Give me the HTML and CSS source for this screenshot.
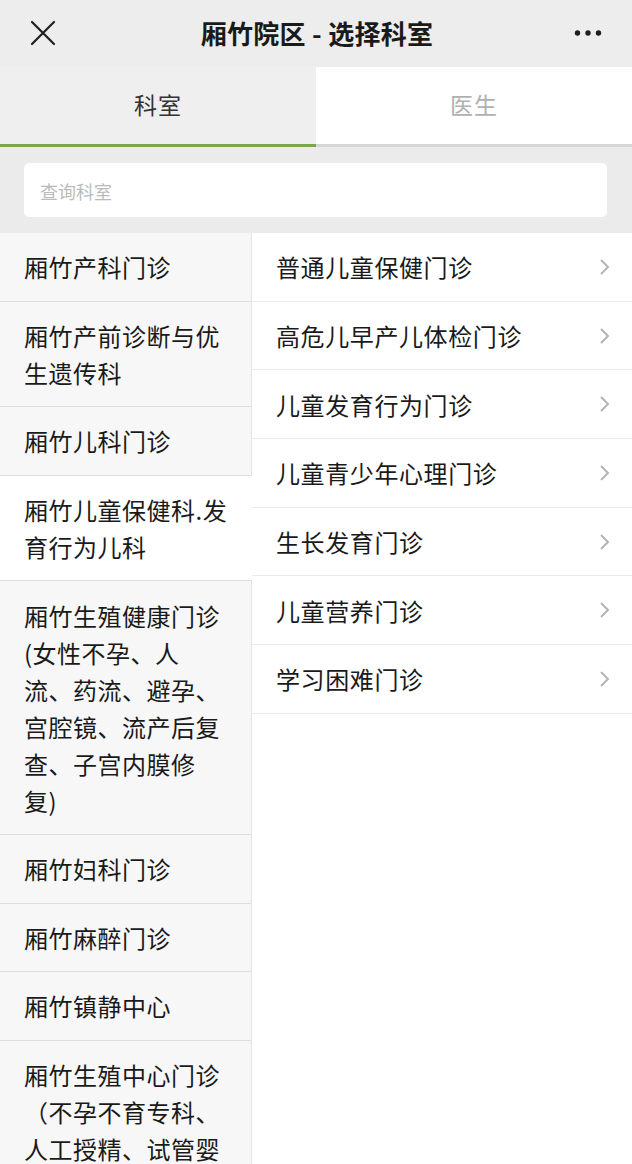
FILE: index.html
```html
<!DOCTYPE html>
<html lang="zh-CN">
<head>
<meta charset="utf-8">
<title>厢竹院区 - 选择科室</title>
<link rel="stylesheet" href="styles.css">
</head>
<body>
<div class="page">
  <header class="nav">
    <svg class="nav-close" width="26" height="26" viewBox="0 0 26 26"><path d="M2 2 L24 24 M24 2 L2 24" stroke="#1f1f1f" stroke-width="2.2" fill="none" stroke-linecap="round"/></svg>
    <h1 class="nav-title">厢竹院区 - 选择科室</h1>
    <svg class="nav-more" width="28" height="8" viewBox="0 0 28 8"><circle cx="3.5" cy="4" r="2.7" fill="#1f1f1f"/><circle cx="14" cy="4" r="2.7" fill="#1f1f1f"/><circle cx="24.5" cy="4" r="2.7" fill="#1f1f1f"/></svg>
  </header>

  <div class="tabs">
    <div class="tab tab-active">科室</div>
    <div class="tab">医生</div>
  </div>

  <div class="search-wrap">
    <div class="search">查询科室</div>
  </div>

  <div class="lists">
    <ul class="dept-list">
      <li class="dept">厢竹产科门诊</li>
      <li class="dept">厢竹产前诊断与优生遗传科</li>
      <li class="dept">厢竹儿科门诊</li>
      <li class="dept dept-active">厢竹儿童保健科.发育行为儿科</li>
      <li class="dept">厢竹生殖健康门诊(女性不孕、人流、药流、避孕、宫腔镜、流产后复查、子宫内膜修复)</li>
      <li class="dept">厢竹妇科门诊</li>
      <li class="dept">厢竹麻醉门诊</li>
      <li class="dept">厢竹镇静中心</li>
      <li class="dept">厢竹生殖中心门诊（不孕不育专科、人工授精、试管婴儿）</li>
    </ul>
    <ul class="clinic-list">
      <li class="clinic"><span>普通儿童保健门诊</span><svg class="chev" width="11" height="18" viewBox="0 0 11 18"><path d="M2 2 L9 9 L2 16" stroke="#b4b4b4" stroke-width="2" fill="none"/></svg></li>
      <li class="clinic"><span>高危儿早产儿体检门诊</span><svg class="chev" width="11" height="18" viewBox="0 0 11 18"><path d="M2 2 L9 9 L2 16" stroke="#b4b4b4" stroke-width="2" fill="none"/></svg></li>
      <li class="clinic"><span>儿童发育行为门诊</span><svg class="chev" width="11" height="18" viewBox="0 0 11 18"><path d="M2 2 L9 9 L2 16" stroke="#b4b4b4" stroke-width="2" fill="none"/></svg></li>
      <li class="clinic"><span>儿童青少年心理门诊</span><svg class="chev" width="11" height="18" viewBox="0 0 11 18"><path d="M2 2 L9 9 L2 16" stroke="#b4b4b4" stroke-width="2" fill="none"/></svg></li>
      <li class="clinic"><span>生长发育门诊</span><svg class="chev" width="11" height="18" viewBox="0 0 11 18"><path d="M2 2 L9 9 L2 16" stroke="#b4b4b4" stroke-width="2" fill="none"/></svg></li>
      <li class="clinic"><span>儿童营养门诊</span><svg class="chev" width="11" height="18" viewBox="0 0 11 18"><path d="M2 2 L9 9 L2 16" stroke="#b4b4b4" stroke-width="2" fill="none"/></svg></li>
      <li class="clinic"><span>学习困难门诊</span><svg class="chev" width="11" height="18" viewBox="0 0 11 18"><path d="M2 2 L9 9 L2 16" stroke="#b4b4b4" stroke-width="2" fill="none"/></svg></li>
    </ul>
  </div>
</div>
</body>
</html>
```

FILE: styles.css
```css
* { box-sizing: border-box; }
html, body {
  margin: 0;
  padding: 0;
  background: #ffffff;
}
body {
  font-family: "Noto Sans CJK SC", "Noto Sans", sans-serif;
  color: #1a1a1a;
  width: 632px;
  height: 1164px;
  overflow: hidden;
}
.page {
  display: flex;
  flex-direction: column;
  height: 1164px;
}
.nav {
  height: 67px;
  background: #ededed;
  display: flex;
  align-items: center;
  justify-content: space-between;
  padding: 0 30px 2px 30px;
  flex-shrink: 0;
}
.nav-close { display: block; }
.nav-title {
  margin: 0;
  font-size: 26px;
  font-weight: 700;
  color: #1a1a1a;
  letter-spacing: 0.3px;
  margin-left: 4px;
}
.nav-more { display: block; }

.tabs {
  display: flex;
  height: 80px;
  flex-shrink: 0;
}
.tab {
  flex: 1;
  display: flex;
  align-items: center;
  justify-content: center;
  font-size: 23px;
  letter-spacing: 1px;
  color: #b0b0b0;
  background: #ffffff;
  border-bottom: 3px solid #d6d6d6;
  padding-bottom: 4px;
}
.tab-active {
  background: #efefef;
  color: #333333;
  border-bottom-color: #7fa44f;
}

.search-wrap {
  background: #ebebeb;
  padding: 16px 25px 16px 24px;
  flex-shrink: 0;
}
.search {
  height: 54px;
  background: #ffffff;
  border-radius: 5px;
  padding: 2px 0 0 16px;
  display: flex;
  align-items: center;
  font-size: 18px;
  color: #bbbbbb;
}

.lists {
  flex: 1;
  display: flex;
  min-height: 0;
}
.dept-list, .clinic-list {
  list-style: none;
  margin: 0;
  padding: 0;
}
.dept-list {
  width: 252px;
  flex-shrink: 0;
  background: #f7f7f7;
  border-right: 1px solid #e4e4e4;
}
.dept {
  padding: 15.3px 23.5px 15.3px 24px;
  font-size: 24px;
  line-height: 37px;
  letter-spacing: 0.5px;
  border-bottom: 1px solid #dedede;
}
.dept-active {
  background: #ffffff;
  margin-right: -1px;
  padding-right: 24.5px;
  position: relative;
}
.clinic-list {
  flex: 1;
  background: #ffffff;
}
.clinic {
  height: 68.7px;
  display: flex;
  align-items: center;
  justify-content: space-between;
  padding: 0 22px 0 24px;
  font-size: 24px;
  letter-spacing: 0.6px;
  border-bottom: 1px solid #ebebeb;
}
.chev { display: block; flex-shrink: 0; }
```
